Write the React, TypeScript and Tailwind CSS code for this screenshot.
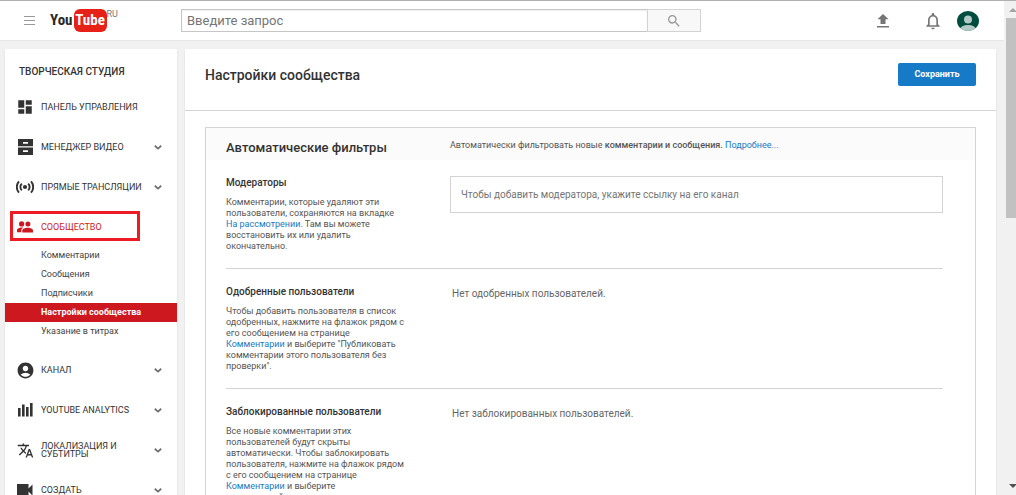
import React from "react";
import clsx from "clsx";
import {
  MdAccountCircle,
  MdDashboard,
  MdNotificationsNone,
  MdSearch,
  MdTranslate,
} from "react-icons/md";

const CabinetIcon = () => (
  <svg width="16" height="16" viewBox="0 0 16 16" fill="currentColor">
    <path
      fillRule="evenodd"
      d="M1 0h15v7.300H1zM6 3v1.700h5V3zM1 8.500h15V16H1zM6 11.300v1.700h5v-1.700z"
    />
  </svg>
);

const BroadcastIcon = () => (
  <svg
    width="18"
    height="14"
    viewBox="0 0 18 14"
    fill="none"
    stroke="currentColor"
    strokeWidth="1.900"
  >
    <circle cx="9" cy="7" r="2.100" fill="currentColor" stroke="none" />
    <path d="M5.800 3.600a4.800 4.800 0 0 0 0 6.800M12.200 3.600a4.800 4.800 0 0 1 0 6.800" />
    <path d="M3 1.400a8.200 8.200 0 0 0 0 11.200M15 1.400a8.200 8.200 0 0 1 0 11.200" />
  </svg>
);

const PeopleIcon = () => (
  <svg width="16" height="12" viewBox="0 0 16 12" fill="currentColor">
    <circle cx="4.600" cy="2.900" r="2.600" />
    <circle cx="10.900" cy="3.100" r="2.500" />
    <path d="M0 11.200V9.200c0-1.900 2.600-2.700 4.600-2.700.6 0 1.200.1 1.700.2-1.500.8-2 1.700-2 2.900v1.600z" />
    <path d="M5.300 11.600V9.500c0-1.800 3-2.800 5.400-2.800s5.300 1 5.300 2.800v2.100z" />
  </svg>
);

const AnalyticsIcon = () => (
  <svg width="16" height="14" viewBox="0 0 16 14" fill="currentColor">
    <path d="M1 5h2.600v8.500H1zM5 1.500h2.600v12H5zM9 4h2.600v9.500H9zM13 0h2.600v13.500H13z" />
  </svg>
);

const CameraIcon = () => (
  <svg width="16" height="12" viewBox="0 0 16 12" fill="currentColor">
    <path d="M0 0h11.500v4.500L15.500.5v11l-4-4V12H0z" />
  </svg>
);

const ChevronIcon = () => (
  <svg
    width="8"
    height="5"
    viewBox="0 0 8 5"
    fill="none"
    stroke="#707070"
    strokeWidth="1.800"
    className="shrink-0"
  >
    <path d="M.8.8 4 3.600 7.200.8" />
  </svg>
);

interface NavItem {
  label: string;
  icon: React.ReactNode;
  expandable?: boolean;
  children?: string[];
}

const navItems: NavItem[] = [
  { label: "ПАНЕЛЬ УПРАВЛЕНИЯ", icon: <MdDashboard size={18} /> },
  { label: "МЕНЕДЖЕР ВИДЕО", icon: <CabinetIcon />, expandable: true },
  { label: "ПРЯМЫЕ ТРАНСЛЯЦИИ", icon: <BroadcastIcon />, expandable: true },
  {
    label: "СООБЩЕСТВО",
    icon: <PeopleIcon />,
    children: [
      "Комментарии",
      "Сообщения",
      "Подписчики",
      "Настройки сообщества",
      "Указание в титрах",
    ],
  },
  { label: "КАНАЛ", icon: <MdAccountCircle size={19} />, expandable: true },
  { label: "YOUTUBE ANALYTICS", icon: <AnalyticsIcon />, expandable: true },
  {
    label: "ЛОКАЛИЗАЦИЯ И СУБТИТРЫ",
    icon: <MdTranslate size={17} />,
    expandable: true,
  },
  { label: "СОЗДАТЬ", icon: <CameraIcon />, expandable: true },
];

const ACTIVE_PAGE = "Настройки сообщества";

const Logo = () => (
  <a href="#" aria-label="YouTube RU" className="ml-[15px] flex items-start">
    <span className="flex h-6 items-center font-['Liberation_Sans_Narrow','Roboto_Condensed','Roboto',sans-serif] text-[15px] font-bold text-[#282828]">
      You
      <span className="ml-px flex h-[23px] w-[33px] items-center justify-center rounded-md bg-[#e62117] text-[15px] text-white">
        Tube
      </span>
    </span>
    <span className="text-[9px] leading-[10px] text-[#777]">RU</span>
  </a>
);

const Header = () => (
  <header className="flex h-10 shrink-0 items-center border-b border-[#e6e6e6] bg-white pr-[25px] pl-6">
    <button type="button" aria-label="Меню">
      <svg width="11" height="9" viewBox="0 0 11 9" fill="#999">
        <path d="M0 0h11v1H0zM0 4h11v1H0zM0 8h11v1H0z" />
      </svg>
    </button>
    <div className="w-[146px] shrink-0">
      <Logo />
    </div>
    <form className="flex h-[23px] w-[520px]">
      <input
        type="text"
        aria-label="Поиск"
        placeholder="Введите запрос"
        className="min-w-0 flex-1 border border-[#c6c6c6] px-[5px] text-[13px] shadow-[inset_0_1px_2px_#eee] outline-none placeholder:text-[#757575]"
      />
      <button
        type="submit"
        aria-label="Найти"
        className="-ml-px flex w-[54px] items-center justify-center border border-[#d3d3d3] bg-[#f8f8f8] text-[#999]"
      >
        <MdSearch size={16} />
      </button>
    </form>
    <div className="ml-auto flex items-center">
      <button type="button" aria-label="Загрузить">
        <svg width="12" height="14" viewBox="0 0 12 14" fill="#757575">
          <path d="M6 0l5.500 5.300H8.500V10h-5V5.300h-3zM0 12h12v1.500H0z" />
        </svg>
      </button>
      <button type="button" aria-label="Уведомления" className="ml-[34px] text-[#757575]">
        <MdNotificationsNone size={20} />
      </button>
      <button type="button" aria-label="Аккаунт" className="ml-[14px]">
        <svg width="22" height="20" viewBox="0 0 22 20">
          <clipPath id="avatar">
            <ellipse cx="11" cy="10" rx="11" ry="10" />
          </clipPath>
          <g clipPath="url(#avatar)">
            <rect width="22" height="20" fill="#004d40" />
            <circle cx="11" cy="8.500" r="4" fill="#b2c9c5" />
            <ellipse cx="11" cy="18.500" rx="8" ry="4.500" fill="#b2c9c5" />
          </g>
        </svg>
      </button>
    </div>
  </header>
);

const Sidebar = () => (
  <aside className="w-[172px] shrink-0 bg-white shadow-[0_1px_2px_rgba(0,0,0,0.1)]">
    <h2 className="pt-4 pl-[14px] text-[10px] leading-[14px] font-medium text-[#333]">
      ТВОРЧЕСКАЯ СТУДИЯ
    </h2>
    <nav className="mt-2">
      {navItems.map((item) => (
        <div key={item.label}>
          <div className="relative">
            <a
              href="#"
              className={clsx(
                "flex h-10 items-center pr-[15px] text-[9px] leading-2",
                item.children ? "text-[#cc181e]" : "text-[#333]"
              )}
            >
              <span className="ml-[10px] flex w-5 shrink-0 justify-center">
                {item.icon}
              </span>
              <span className="ml-[6px] w-[105px]">{item.label}</span>
              <span className="ml-auto">
                {item.expandable && <ChevronIcon />}
              </span>
            </a>
            {item.children && (
              <div className="pointer-events-none absolute top-1 left-[5px] h-[30px] w-[130px] border-3 border-[#ed1c24]" />
            )}
          </div>
          {item.children && (
            <ul className="-mt-px pb-[9px]">
              {item.children.map((child) => (
                <li key={child}>
                  <a
                    href="#"
                    className={clsx(
                      "block pl-9 text-[9px] leading-[19px]",
                      child === ACTIVE_PAGE
                        ? "bg-[#cc181e] font-bold text-white"
                        : "text-[#444]"
                    )}
                  >
                    {child}
                  </a>
                </li>
              ))}
            </ul>
          )}
        </div>
      ))}
    </nav>
  </aside>
);

interface SettingRowProps {
  title: string;
  description: React.ReactNode;
  htmlFor?: string;
  last?: boolean;
  children: React.ReactNode;
}

const SettingRow = ({
  title,
  description,
  htmlFor,
  last,
  children,
}: SettingRowProps) => (
  <div
    className={clsx(
      "mr-8 ml-5 flex pt-4 pb-4",
      !last && "border-b border-[#d3d3d3]"
    )}
  >
    <div className="w-56 shrink-0">
      <h3 className="text-[10px] leading-[14px] font-medium text-[#333]">
        {htmlFor ? <label htmlFor={htmlFor}>{title}</label> : title}
      </h3>
      <p className="mt-[7px] w-[180px] text-[9px] leading-[11px] text-[#555]">
        {description}
      </p>
    </div>
    <div className="min-w-0 flex-1">{children}</div>
  </div>
);

const TextLink = ({ children }: { children: React.ReactNode }) => (
  <a href="#" className="text-[#167ac6]">
    {children}
  </a>
);

const Settings = () => (
  <main className="min-w-0 flex-1 bg-white shadow-[0_1px_2px_rgba(0,0,0,0.1)]">
    <div className="flex h-[62px] items-start justify-between border-b border-[#d3d3d3] px-5 pt-[14px]">
      <h1 className="pt-[2px] text-sm leading-5 font-medium text-[#333]">
        Настройки сообщества
      </h1>
      <button
        type="button"
        className="h-[23px] w-[78px] rounded-xs bg-[#167ac6] text-[9px] font-bold text-white"
      >
        Сохранить
      </button>
    </div>

    <section className="mx-5 mt-4 border border-[#d3d3d3]">
      <div className="flex h-8 bg-[#fbfbfb] px-5">
        <h2 className="w-56 shrink-0 pt-[10px] text-[13px] leading-5 font-medium text-[#333]">
          Автоматические фильтры
        </h2>
        <p className="pt-[11px] text-[9px] leading-3 text-[#555]">
          Автоматически фильтровать новые{" "}
          <span className="font-medium">комментарии и сообщения.</span>{" "}
          <TextLink>Подробнее...</TextLink>
        </p>
      </div>

      <SettingRow
        title="Модераторы"
        htmlFor="moderator"
        description={
          <>
            Комментарии, которые удаляют эти
            <br />
            пользователи, сохраняются на вкладке
            <br />
            <TextLink>На рассмотрении</TextLink>. Там вы можете
            <br />
            восстановить их или удалить
            <br />
            окончательно.
          </>
        }
      >
        <input
          id="moderator"
          type="text"
          placeholder="Чтобы добавить модератора, укажите ссылку на его канал"
          className="block h-[37px] w-full border border-[#d3d3d3] px-[10px] text-[10px] text-[#555] outline-none placeholder:text-[#757575]"
        />
      </SettingRow>

      <SettingRow
        title="Одобренные пользователи"
        description={
          <>
            Чтобы добавить пользователя в список
            <br />
            одобренных, нажмите на флажок рядом с
            <br />
            его сообщением на странице
            <br />
            <TextLink>Комментарии</TextLink> и выберите "Публиковать
            <br />
            комментарии этого пользователя без
            <br />
            проверки".
          </>
        }
      >
        <p className="pt-[2px] pl-[2px] text-[10px] leading-[14px] text-[#666]">
          Нет одобренных пользователей.
        </p>
      </SettingRow>

      <SettingRow
        title="Заблокированные пользователи"
        last
        description={
          <>
            Все новые комментарии этих
            <br />
            пользователей будут скрыты
            <br />
            автоматически. Чтобы заблокировать
            <br />
            пользователя, нажмите на флажок рядом
            <br />
            с его сообщением на странице
            <br />
            <TextLink>Комментарии</TextLink> и выберите
            <br />
            комментарий пользователя.
          </>
        }
      >
        <p className="pt-[2px] pl-[2px] text-[10px] leading-[14px] text-[#666]">
          Нет заблокированных пользователей.
        </p>
      </SettingRow>
    </section>
  </main>
);

const ScrollTrack = () => (
  <div
    aria-hidden="true"
    className="flex w-3 shrink-0 flex-col items-end bg-[#f1f1f1]"
  >
    <svg width="7" height="17" viewBox="0 0 7 17" fill="#a3a3a3">
      <path d="M0 11l4-4 4 4z" />
    </svg>
    <div className="h-[200px] w-[10px] bg-[#c1c1c1]" />
    <svg
      width="7"
      height="17"
      viewBox="0 0 7 17"
      fill="#505050"
      className="mt-auto"
    >
      <path d="M0 6l4 4 4-4z" />
    </svg>
  </div>
);

const App: React.FC = () => {
  return (
    <div className="flex h-screen overflow-hidden border-t border-[#b0b0b0] bg-[#f1f1f1] font-['Roboto','Liberation_Sans',sans-serif]">
      <div className="flex min-w-0 flex-1 flex-col">
        <Header />
        <div className="flex min-h-0 flex-1 gap-2 overflow-hidden pt-2 pr-2 pl-[5px]">
          <Sidebar />
          <Settings />
        </div>
      </div>
      <ScrollTrack />
    </div>
  );
};

export default App;
